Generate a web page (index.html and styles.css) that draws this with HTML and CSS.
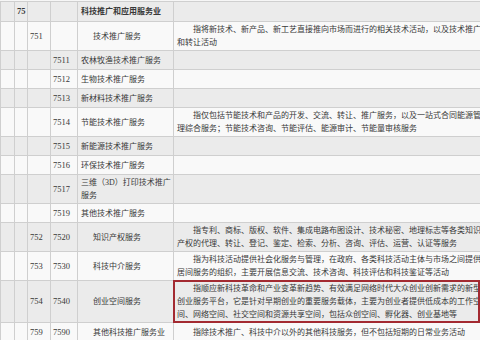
FILE: index.html
```html
<!DOCTYPE html>
<html lang="zh-CN">
<head>
<meta charset="utf-8">
<title>科技推广和应用服务业</title>
<link rel="stylesheet" href="styles.css">
</head>
<body>
<table class="cls">
  <colgroup>
    <col class="c0"><col class="c1"><col class="c2"><col class="c3"><col class="c4"><col class="c5">
  </colgroup>
  <tbody>
    <tr class="major">
      <td></td><td class="num">75</td><td></td><td></td>
      <td class="name">科技推广和应用服务业</td><td class="desc"></td>
    </tr>
    <tr class="two">
      <td></td><td></td><td class="num">751</td><td></td>
      <td class="name ind">技术推广服务</td>
      <td class="desc"><span class="lead">指将新技术、新产品、新工艺直接推向市场而进行的相关技术活动，以及技术推广</span><br>和转让活动</td>
    </tr>
    <tr>
      <td></td><td></td><td></td><td class="num">7511</td>
      <td class="name">农林牧渔技术推广服务</td><td class="desc"></td>
    </tr>
    <tr>
      <td></td><td></td><td></td><td class="num">7512</td>
      <td class="name">生物技术推广服务</td><td class="desc"></td>
    </tr>
    <tr>
      <td></td><td></td><td></td><td class="num">7513</td>
      <td class="name">新材料技术推广服务</td><td class="desc"></td>
    </tr>
    <tr class="two">
      <td></td><td></td><td></td><td class="num">7514</td>
      <td class="name">节能技术推广服务</td>
      <td class="desc"><span class="lead">指仅包括节能技术和产品的开发、交流、转让、推广服务，以及一站式合同能源管</span><br>理综合服务；节能技术咨询、节能评估、能源审计、节能量审核服务</td>
    </tr>
    <tr>
      <td></td><td></td><td></td><td class="num">7515</td>
      <td class="name">新能源技术推广服务</td><td class="desc"></td>
    </tr>
    <tr>
      <td></td><td></td><td></td><td class="num">7516</td>
      <td class="name">环保技术推广服务</td><td class="desc"></td>
    </tr>
    <tr class="two">
      <td></td><td></td><td></td><td class="num">7517</td>
      <td class="name">三维（3D）打印技术推广<br>服务</td><td class="desc"></td>
    </tr>
    <tr>
      <td></td><td></td><td></td><td class="num">7519</td>
      <td class="name">其他技术推广服务</td><td class="desc"></td>
    </tr>
    <tr class="two">
      <td></td><td></td><td class="num">752</td><td class="num">7520</td>
      <td class="name ind">知识产权服务</td>
      <td class="desc"><span class="lead">指专利、商标、版权、软件、集成电路布图设计、技术秘密、地理标志等各类知识</span><br>产权的代理、转让、登记、鉴定、检索、分析、咨询、评估、运营、认证等服务</td>
    </tr>
    <tr class="two">
      <td></td><td></td><td class="num">753</td><td class="num">7530</td>
      <td class="name ind">科技中介服务</td>
      <td class="desc"><span class="lead">指为科技活动提供社会化服务与管理，在政府、各类科技活动主体与市场之间提供</span><br>居间服务的组织，主要开展信息交流、技术咨询、科技评估和科技鉴证等活动</td>
    </tr>
    <tr class="three">
      <td></td><td></td><td class="num">754</td><td class="num">7540</td>
      <td class="name ind">创业空间服务</td>
      <td class="desc marked"><span class="lead">指顺应新科技革命和产业变革新趋势、有效满足网络时代大众创业创新需求的新型</span><br>创业服务平台，它是针对早期创业的重要服务载体，主要为创业者提供低成本的工作空<br>间、网络空间、社交空间和资源共享空间，包括众创空间、孵化器、创业基地等</td>
    </tr>
    <tr>
      <td></td><td></td><td class="num">759</td><td class="num">7590</td>
      <td class="name ind">其他科技推广服务业</td>
      <td class="desc"><span class="lead">指除技术推广、科技中介以外的其他科技服务，但不包括短期的日常业务活动</span></td>
    </tr>
  </tbody>
</table>
</body>
</html>
```

FILE: styles.css
```css
html, body {
  margin: 0;
  padding: 0;
  background: #f6f6f6;
  overflow: hidden;
}

body {
  width: 480px;
  height: 340px;
  font-family: "Liberation Serif", "Noto Sans CJK SC", serif;
  font-size: 8px;
  color: #383838;
}

.cls {
  border-collapse: collapse;
  table-layout: fixed;
  width: 488px;
  margin: 1px 0 0 0;
}

.c0 { width: 14px; }
.c1 { width: 13px; }
.c2 { width: 23px; }
.c3 { width: 27px; }
.c4 { width: 96px; }
.c5 { width: 315px; }

.cls td {
  border: 1px solid #cfcfcf;
  padding: 1px 2px;
  height: 16px;
  line-height: 13px;
  vertical-align: middle;
  white-space: nowrap;
  overflow: visible;
}

.cls tr:nth-child(odd) td { background: #ebebeb; }
.cls tr:nth-child(even) td { background: #f9f9f9; }

.cls .num { font-size: 8.5px; }
.cls .name { padding-left: 3px; }
.cls .name.ind { padding-left: 15px; }
.cls .desc { padding-left: 3px; }

.lead { display: inline-block; text-indent: 16px; }

.major td { font-weight: bold; height: 17px; }

.cls td.marked { position: relative; }
.cls td.marked::after {
  content: "";
  position: absolute;
  left: -1px;
  top: -1px;
  right: 8px;
  bottom: -1px;
  border: 2px solid #a32a31;
  pointer-events: none;
}
```
